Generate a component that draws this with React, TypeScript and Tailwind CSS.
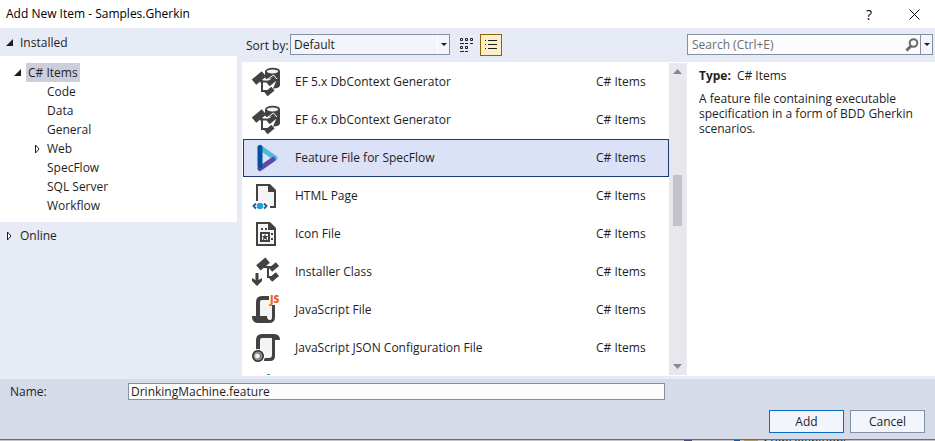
import type { ReactNode } from "react";

const INK = "#424242";
const PAPER = "#f4f4f4";

function Glyph({ children }: { children: ReactNode }) {
  return (
    <svg aria-hidden="true" viewBox="0 0 32 32" className="h-8 w-8 shrink-0 overflow-visible">
      {children}
    </svg>
  );
}

function Block({ x, y, w, h }: { x: number; y: number; w: number; h: number }) {
  return (
    <rect x={x - w / 2} y={y - h / 2} width={w} height={h} fill={INK} transform={`rotate(-40 ${x} ${y})`} />
  );
}

function DbContextIcon() {
  return (
    <Glyph>
      <path d="M15 5.500v6l2 2 7-2 2 4-3 7c4 0 7-1 7-3.500v-14z" fill={INK} />
      <ellipse cx="22.500" cy="5.500" rx="6.600" ry="2.800" fill={PAPER} stroke={INK} strokeWidth="1.800" />
      <Block x={9} y={12} w={13} h={7} />
      <path d="M10 15.500h9M12 14v11h6" fill="none" stroke={INK} strokeWidth="2" />
      <path d="M16.500 14l7-5 3.500 4" fill="none" stroke="#fff" strokeWidth="1" />
      <Block x={21.5} y={15.5} w={9} h={5} />
      <Block x={19.5} y={25.5} w={9} h={5} />
    </Glyph>
  );
}

function SpecFlowIcon() {
  return (
    <Glyph>
      <g fill="none" strokeWidth="5" strokeLinecap="round">
        <path d="M10 5.500L25 16" stroke="#4dbbdb" />
        <path d="M23 17.500L10 26.500" stroke="#5c4a9e" />
        <path d="M10 5.500V24" stroke="#00549f" />
      </g>
    </Glyph>
  );
}

function HtmlIcon() {
  return (
    <Glyph>
      <path d="M7 5h13l5 5v17H7z" fill={PAPER} />
      <path d="M1 21h18v9H1z" fill="#fff" />
      <path d="M7 21V5H20M25 10v17h-5" fill="none" stroke={INK} strokeWidth="2" />
      <path d="M18 4h2l6 6v2h-8z" fill={INK} />
      <circle cx="10" cy="26" r="3.200" fill="#1ba1e2" />
      <path d="M6 23.500L3.500 26 6 28.500M14 23.500l2.500 2.500-2.500 2.500" fill="none" stroke="#2f5f85" strokeWidth="2" />
    </Glyph>
  );
}

function ImageFileIcon() {
  return (
    <Glyph>
      <path d="M7 5h12l6 6v16H7z" fill={PAPER} stroke={INK} strokeWidth="2" />
      <path d="M18 4h2l6 6v2h-8z" fill={INK} />
      <path d="M11 10h2v2h-2zM15 10h2v2h-2zM21 15h2v2h-2zM21 20h2v2h-2z" fill={INK} />
      <rect x="11" y="15" width="8" height="8" fill="#fff" stroke={INK} strokeWidth="2" />
      <path d="M15 16l1 2h2.500l-2 1.500 1 3-2.500-1.800-2.500 1.800 1-3-2-1.500H14z" fill={INK} />
    </Glyph>
  );
}

function InstallerIcon() {
  return (
    <Glyph>
      <path d="M14 11h9M18 11v10h5" fill="none" stroke={INK} strokeWidth="2" />
      <Block x={13} y={8} w={12} h={7} />
      <Block x={24} y={11} w={9} h={5} />
      <Block x={24} y={21} w={9} h={5} />
      <path d="M5.500 17h3v7l3.500-2v3l-5 5-5-5v-3l3.500 2z" fill={INK} />
    </Glyph>
  );
}

function JavaScriptIcon() {
  return (
    <Glyph>
      <path d="M9 6h14v18H9z" fill={PAPER} />
      <path d="M8 22V8q0-4 4-4h7" fill="none" stroke={INK} strokeWidth="4" />
      <path d="M2 22h15q0 4 3 4 2 0 2-3V11h3v12q0 6-6 6H8q-6 0-6-7z" fill={INK} />
      <text x="20" y="9" fontSize="10" fontWeight="800" fontFamily="Open Sans, sans-serif" fill="#f0602a">
        JS
      </text>
    </Glyph>
  );
}

function JsonIcon() {
  return (
    <Glyph>
      <path d="M9 6h14v20H9z" fill={PAPER} />
      <path d="M8 18V8q0-4 4-4h10" fill="none" stroke={INK} strokeWidth="4" />
      <path d="M12 2h12q6 0 6 6h-5v16q0 5-5 5h-6v-3h5q3 0 3-3V6H12z" fill={INK} />
      <circle cx="8" cy="24" r="7" fill="#fff" />
      <circle cx="8" cy="24" r="6" fill="#2e2e2e" />
      <circle cx="8" cy="24" r="3.500" fill="none" stroke="#8e8e8e" strokeWidth="2" />
      <circle cx="7.500" cy="24" r="2.500" fill="#efefef" />
    </Glyph>
  );
}

const items: { name: string; icon: ReactNode; selected?: boolean }[] = [
  { name: "EF 5.x DbContext Generator", icon: <DbContextIcon /> },
  { name: "EF 6.x DbContext Generator", icon: <DbContextIcon /> },
  { name: "Feature File for SpecFlow", icon: <SpecFlowIcon />, selected: true },
  { name: "HTML Page", icon: <HtmlIcon /> },
  { name: "Icon File", icon: <ImageFileIcon /> },
  { name: "Installer Class", icon: <InstallerIcon /> },
  { name: "JavaScript File", icon: <JavaScriptIcon /> },
  { name: "JavaScript JSON Configuration File", icon: <JsonIcon /> },
];

const categories = ["Code", "Data", "General", "Web", "SpecFlow", "SQL Server", "Workflow"];

function Expanded() {
  return (
    <svg aria-hidden="true" viewBox="0 0 8 8" className="h-2 w-2 shrink-0">
      <path d="M7 0v7H0z" fill="#1e1e1e" />
    </svg>
  );
}

function Collapsed() {
  return (
    <svg aria-hidden="true" viewBox="0 0 6 10" className="h-2.5 w-1.5 shrink-0">
      <path d="M1.500 1v8L5 5z" fill="#fff" stroke="#1e1e1e" />
    </svg>
  );
}

function Caret() {
  return (
    <svg aria-hidden="true" viewBox="0 0 6 3" className="h-[3px] w-1.5">
      <path d="M0 0h6L3 3z" fill="#1e1e1e" />
    </svg>
  );
}

function Categories() {
  return (
    <nav aria-label="Categories" className="w-[242px] shrink-0">
      <button className="flex h-7 w-full items-center gap-1.5 pt-0.5 pl-1.5">
        <Expanded />
        Installed
      </button>
      <div className="mr-[5px] bg-white pt-[7px] pb-[7px]">
        <button className="flex h-[19px] items-center gap-1 pl-3.5">
          <Expanded />
          <span className="bg-[#cccedb] px-0.5 leading-[19px]">C# Items</span>
        </button>
        <ul>
          {categories.map((name) => (
            <li key={name}>
              <button className="flex h-[19px] items-center pl-[34px]">
                <span className="w-[13px]">{name === "Web" && <Collapsed />}</span>
                {name}
              </button>
            </li>
          ))}
        </ul>
      </div>
      <button className="flex h-7 w-full items-center gap-2 pl-1.5">
        <Collapsed />
        Online
      </button>
    </nav>
  );
}

function Toolbar() {
  return (
    <div className="flex h-[34px] shrink-0 items-start pt-1.5 pr-0.5 pl-1">
      <label htmlFor="sort" className="w-11 shrink-0 leading-6 whitespace-nowrap">
        Sort by:
      </label>
      <div className="relative w-40">
        <select
          id="sort"
          className="h-[21px] w-full appearance-none border border-[#8591a2] bg-[#f2f5fc] pr-4 pl-[3px] leading-[19px]"
        >
          <option>Default</option>
        </select>
        <span className="pointer-events-none absolute inset-y-px right-px flex w-3 items-center justify-center border-l border-white">
          <Caret />
        </span>
      </div>
      <button aria-label="Small icons" className="mr-0.5 ml-1.5 flex h-[22px] w-[22px] items-center justify-center">
        <svg viewBox="0 0 14 15" className="h-[15px] w-3.5">
          <path
            d="M.5.5h2v2h-2zM5.500.5h2v2h-2zM10.500.5h2v2h-2zM.5 8.500h2v2h-2zM5.500 8.500h2v2h-2zM0 5.500h4M5 5.500h3M10 5.500h3M0 13.500h4M5 13.500h3"
            fill="none"
            stroke="#1e1e1e"
          />
        </svg>
      </button>
      <button
        aria-label="Medium icons"
        aria-pressed="true"
        className="flex h-[22px] w-[22px] items-center justify-center border border-[#8a6508] bg-[#fdeec8]"
      >
        <svg viewBox="0 0 12 10" className="h-2.5 w-3">
          <path d="M0 .5h1M3 .5h9M0 4.500h1M3 4.500h9M0 8.500h1M3 8.500h9" stroke="#1e1e1e" />
        </svg>
      </button>
      <div className="ml-auto flex h-[21px] w-[246px] items-center border border-[#8591a2] bg-[#fcfcfc]">
        <input
          aria-label="Search"
          placeholder="Search (Ctrl+E)"
          className="min-w-0 flex-1 bg-transparent pl-1 outline-none placeholder:text-[#6d6d6d]"
        />
        <button aria-label="Search" className="mr-px">
          <svg viewBox="0 0 14 14" className="h-3.5 w-3.5" fill="none" stroke="#6a6a6a">
            <circle cx="8.500" cy="5" r="3.800" strokeWidth="2" />
            <path d="M6 8L1.500 12.500" strokeWidth="3" />
          </svg>
        </button>
        <button
          aria-label="Search options"
          className="flex h-full w-3 items-center justify-center border-l border-[#8591a2] bg-[#f2f5fc]"
        >
          <Caret />
        </button>
      </div>
    </div>
  );
}

function Templates() {
  return (
    <div className="flex min-w-0 flex-1 overflow-hidden bg-white pt-px">
      <ul className="min-w-0 flex-1 pl-px">
        {items.map(({ name, icon, selected }) => (
          <li key={name}>
            <button
              aria-pressed={!!selected}
              className={`flex h-[38px] w-full items-center border pl-1.5 text-left ${
                selected ? "border-[#1c3a73] bg-[#dbe1f7]" : "border-transparent"
              }`}
            >
              {icon}
              <span className="ml-[13px] flex-1">{name}</span>
              <span className="w-[72px]">C# Items</span>
            </button>
          </li>
        ))}
        <li className="pt-[7px] pl-6" aria-hidden="true">
          <div className="h-px w-[3px] bg-[#1aa58c]" />
        </li>
      </ul>
      <div className="mb-px flex w-[17px] flex-col items-center bg-[#e8e8ec]">
        <svg aria-hidden="true" viewBox="0 0 9 5" className="mt-1.5 h-[5px] w-[9px]">
          <path d="M0 5h9L4.500 0z" fill="#868999" />
        </svg>
        <div className="mt-[101px] h-[51px] w-[9px] bg-[#c2c3c9]" />
        <svg aria-hidden="true" viewBox="0 0 9 5" className="mt-auto mb-1.5 h-[5px] w-[9px]">
          <path d="M0 0h9L4.500 5z" fill="#868999" />
        </svg>
      </div>
    </div>
  );
}

export default function App() {
  return (
    <div className="flex h-screen flex-col overflow-hidden bg-[#e6ebf5] font-['Open_Sans','Noto_Sans',sans-serif] text-[12px] text-[#1e1e1e]">
      <header className="flex h-7 shrink-0 items-center bg-white pr-[15px] pl-1.5 text-black">
        <h1 className="flex-1">Add New Item - Samples.Gherkin</h1>
        <button aria-label="Help" className="w-3 text-[14px]">
          ?
        </button>
        <button aria-label="Close" className="ml-[34px]">
          <svg viewBox="0 0 11 11" className="h-[11px] w-[11px]" stroke="#000" strokeWidth="1">
            <path d="M.5.5l10 10M10.500.5l-10 10" />
          </svg>
        </button>
      </header>

      <main className="flex min-h-0 flex-1">
        <Categories />
        <div className="flex min-w-0 flex-1 flex-col">
          <Toolbar />
          <div className="mb-[3px] flex min-h-0 flex-1">
            <Templates />
            <aside className="w-[249px] shrink-0 border-l border-[#e6ebf5] bg-white px-3 pt-1.5">
              <p className="leading-4">
                <strong className="mr-1.5">Type:</strong>C# Items
              </p>
              <p className="mt-[7px] leading-[15px]">
                A feature file containing executable specification in a form of BDD Gherkin scenarios.
              </p>
            </aside>
          </div>
        </div>
      </main>

      <footer className="shrink-0 border-b border-[#6d6f78] bg-[#d6dbe9] pt-1 pr-2.5 pb-1.5 pl-2.5">
        <div className="flex h-[17px] items-center">
          <label htmlFor="name" className="w-[118px]">
            Name:
          </label>
          <input
            id="name"
            defaultValue="DrinkingMachine.feature"
            className="mr-[260px] h-[17px] min-w-0 flex-1 border border-[#8591a2] bg-[#fcfcfc] pl-0.5 outline-none"
          />
        </div>
        <div className="mt-2.5 flex justify-end gap-1.5">
          <button className="h-[23px] w-[75px] border border-[#0a6fc2] bg-[#f2f5fc]">Add</button>
          <button className="h-[23px] w-[75px] border border-[#8591a2] bg-[#f2f5fc]">Cancel</button>
        </div>
      </footer>
      <div className="flex h-px shrink-0 justify-end overflow-hidden bg-[#c4c4c6] pr-[86px]">
        <span className="mr-[42px] w-2 bg-[#4b4b78]" />
        <span className="mr-1 w-1.5 bg-[#1a5a9c]" />
        <span className="mr-1.5 w-3.5 bg-[#b39b5c]" />
        <span className="leading-[4px]">StepDefinitions</span>
      </div>
    </div>
  );
}
